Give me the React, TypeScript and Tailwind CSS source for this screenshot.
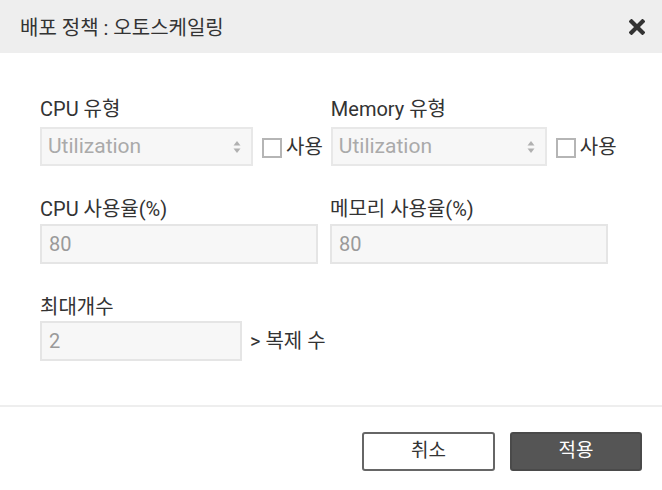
const font = { fontFamily: 'Roboto, "Noto Sans CJK KR", sans-serif' };

function SelectBox({ width }: { width: string }) {
  return (
    <div className={`${width} h-[39px] flex items-center justify-between bg-[#f7f7f7] border-2 border-[#e8e8e8] pl-[6px] pr-[10px]`}>
      <span className="text-[21px] text-[#aaaaaa]">Utilization</span>
      <svg width="8" height="14" viewBox="0 0 8 14">
        <path d="M4 1 L7.5 5.5 H0.5 Z" fill="#b0b0b0" />
        <path d="M4 13 L7.5 8.5 H0.5 Z" fill="#b0b0b0" />
      </svg>
    </div>
  );
}

function UseCheck() {
  return (
    <label className="flex items-center ml-[9px]">
      <span className="w-[20px] h-[20px] border-2 border-[#b5b5b5] bg-white mt-[2px]" />
      <span className="text-[20px] text-[#333] ml-[4px]">사용</span>
    </label>
  );
}

function TextBox({ width, value }: { width: string; value: string }) {
  return (
    <div className={`${width} h-[40px] flex items-center bg-[#f7f7f7] border-2 border-[#e5e5e5] px-[7px]`}>
      <span className="text-[20px] text-[#9a9a9a]">{value}</span>
    </div>
  );
}

export default function App() {
  return (
    <div className="w-[662px] h-[490px] bg-white flex flex-col" style={font}>
      <div className="h-[53px] bg-[#eeeeee] flex items-center justify-between pl-[20px] pr-[17px]">
        <h3 className="text-[20px] text-[#333] mt-[2px]">배포 정책 : 오토스케일링</h3>
        <svg width="16" height="16" viewBox="0 0 16 16">
          <path d="M2.5 2.5 L13.5 13.5 M13.5 2.5 L2.5 13.5" stroke="#333" strokeWidth="4.2" strokeLinecap="square" />
        </svg>
      </div>

      <div className="px-[40px] pt-[44px] flex flex-col">
        <div className="flex">
          <div className="flex flex-col">
            <span className="text-[20px] text-[#333] leading-[24px]">CPU 유형</span>
            <div className="flex items-center mt-[6px]">
              <SelectBox width="w-[213px]" />
              <UseCheck />
            </div>
          </div>
          <div className="flex flex-col ml-[8px]">
            <span className="text-[20px] text-[#333] leading-[24px]">Memory 유형</span>
            <div className="flex items-center mt-[6px]">
              <SelectBox width="w-[216px]" />
              <UseCheck />
            </div>
          </div>
        </div>

        <div className="flex gap-[12px] mt-[31px]">
          <div className="flex flex-col">
            <span className="text-[20px] text-[#333] leading-[24px]">CPU 사용율(%)</span>
            <div className="mt-[3px]">
              <TextBox width="w-[278px]" value="80" />
            </div>
          </div>
          <div className="flex flex-col">
            <span className="text-[20px] text-[#333] leading-[24px]">메모리 사용율(%)</span>
            <div className="mt-[3px]">
              <TextBox width="w-[278px]" value="80" />
            </div>
          </div>
        </div>

        <div className="flex flex-col mt-[31px]">
          <span className="text-[20px] text-[#333] leading-[24px]">최대개수</span>
          <div className="flex items-center mt-[2px]">
            <TextBox width="w-[202px]" value="2" />
            <span className="text-[20px] text-[#333] ml-[8px]">&gt; 복제 수</span>
          </div>
        </div>
      </div>

      <div className="mt-[44px] border-t-2 border-[#eeeeee] flex justify-end gap-[15px] pr-[20px] pt-[25px]">
        <button className="w-[133px] h-[39px] bg-white border-2 border-[#666] rounded-[3px] text-[19px] text-[#333]">취소</button>
        <button className="w-[132px] h-[39px] bg-[#555555] border-2 border-[#4a4a4a] rounded-[3px] text-[19px] text-white">적용</button>
      </div>
    </div>
  );
}
